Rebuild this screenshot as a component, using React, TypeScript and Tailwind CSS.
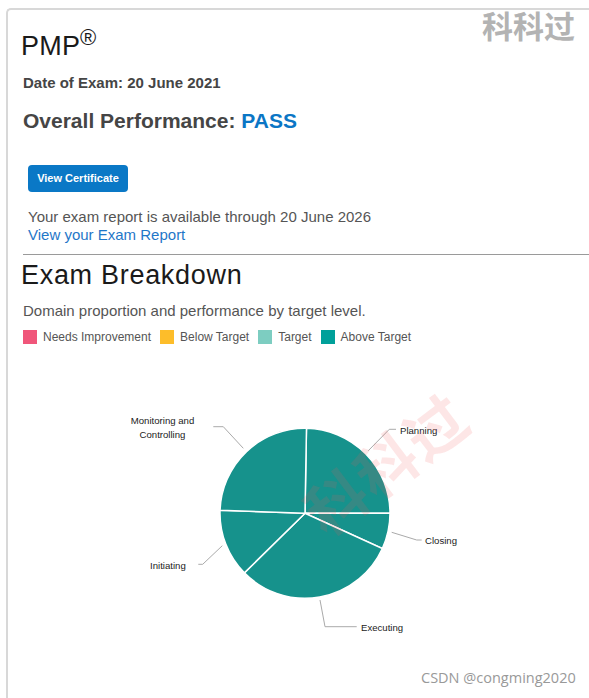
import React from 'react';

const legend = [
  { label: 'Needs Improvement', color: 'bg-[#f0567a]' },
  { label: 'Below Target', color: 'bg-[#fdbd2a]' },
  { label: 'Target', color: 'bg-[#7dcdc1]' },
  { label: 'Above Target', color: 'bg-[#00a09a]' },
];

// pie geometry, in page coordinates (svg is shifted back by its own offset)
const cx = 305;
const cy = 513.3;
const r = 85;
const bounds = [1, 90, 114.5, 225.5, 272, 361];

const pt = (deg: number) => {
  const a = (deg * Math.PI) / 180;
  return [cx + r * Math.sin(a), cy - r * Math.cos(a)];
};

const slicePath = (a0: number, a1: number) => {
  const [x0, y0] = pt(a0);
  const [x1, y1] = pt(a1);
  const large = a1 - a0 > 180 ? 1 : 0;
  return `M ${cx} ${cy} L ${x0} ${y0} A ${r} ${r} 0 ${large} 1 ${x1} ${y1} Z`;
};

const leaders = [
  '368.3,450.7 389.3,429.3 396,429.3',
  '391.7,532.3 416.7,540 421.7,540',
  '320,600 325,626.7 356.7,626.7',
  '222.3,545.7 202.7,564.3 198.3,564.3',
  '243.3,448.3 223.3,426.7 213.3,426.7',
];

function DomainPie() {
  return (
    <svg width="566" height="330" className="block mt-[6px]">
      <g transform="translate(-23,-350)">
        {bounds.slice(0, -1).map((a, i) => (
          <path key={i} d={slicePath(a, bounds[i + 1])} fill="#16928c" stroke="#ffffff" strokeWidth="1.5" />
        ))}
        {leaders.map((p, i) => (
          <polyline key={i} points={p} fill="none" stroke="#aaaaaa" strokeWidth="1" />
        ))}
        <g fontFamily='"Liberation Sans", Arial, sans-serif' fontSize="9.6" fill="#222">
          <text x="400" y="434">Planning</text>
          <text x="425" y="543.5">Closing</text>
          <text x="361" y="631">Executing</text>
          <text x="150" y="568.5">Initiating</text>
          <text x="162.5" y="424" textAnchor="middle">Monitoring and</text>
          <text x="162.5" y="438.3" textAnchor="middle">Controlling</text>
        </g>
      </g>
    </svg>
  );
}

export default function App() {
  return (
    <div className="relative w-[589px] h-[698px] overflow-hidden bg-white font-['Liberation_Sans',Arial,sans-serif]">
      <div className="ml-[6px] mt-[8px] w-[640px] h-[720px] border-l-2 border-t-2 border-[#d8d8d8] rounded-tl-[5px] pl-[15px] pt-[20px]">
        <h1 className="-ml-[2px] text-[27px] leading-[32px] text-[#1a1a1a] tracking-[0.2px]">
          PMP<span className="inline-block align-top text-[22px] leading-[21px] -mt-[3px]">®</span>
        </h1>
        <p className="mt-[11px] text-[15px] leading-[20px] font-bold text-[#454545]">Date of Exam: 20 June 2021</p>
        <p className="mt-[16px] text-[21px] leading-[24px] font-bold text-[#454545]">
          Overall Performance: <span className="text-[#0b76c5]">PASS</span>
        </p>
        <button className="mt-[32px] ml-[5px] w-[100px] h-[27px] rounded-[4px] bg-[#0a78c6] text-white text-[11px] font-bold">
          View Certificate
        </button>
        <div className="mt-[16px] ml-[5px] text-[15px] leading-[18px]">
          <p className="text-[#555555]">Your exam report is available through 20 June 2026</p>
          <a className="text-[#1f77c8]">View your Exam Report</a>
        </div>
        <div className="mt-[10px] h-px bg-[#9a9a9a]" />
        <h2 className="mt-[4px] -ml-[2px] text-[27px] leading-[32px] text-[#1a1a1a] tracking-[0.7px]">Exam Breakdown</h2>
        <p className="mt-[11px] text-[15px] leading-[18px] text-[#555555]">Domain proportion and performance by target level.</p>
        <div className="mt-[10px] flex items-center gap-[9px]">
          {legend.map((l) => (
            <div key={l.label} className="flex items-center gap-[6px]">
              <span className={`w-[14px] h-[14px] ${l.color}`} />
              <span className="text-[12px] leading-[14px] text-[#555555]">{l.label}</span>
            </div>
          ))}
        </div>
        <DomainPie />
      </div>

      <div className="absolute left-[482px] top-[9px] whitespace-nowrap text-[31px] leading-none font-bold text-[#b3b3b3] font-['Noto_Sans_CJK_SC',sans-serif]">
        科科过
      </div>
      <div className="absolute left-[265px] top-[430px] w-[240px] h-[64px] -rotate-[37deg] whitespace-nowrap text-center text-[60px] leading-[64px] font-bold tracking-[2px] text-[rgba(240,90,90,0.15)] font-['Noto_Sans_CJK_SC',sans-serif]">
        科科过
      </div>
      <div className="absolute left-[421px] top-[671px] whitespace-nowrap text-[14.5px] leading-none text-[#999999] font-['Open_Sans',sans-serif]">
        CSDN @congming2020
      </div>
    </div>
  );
}
